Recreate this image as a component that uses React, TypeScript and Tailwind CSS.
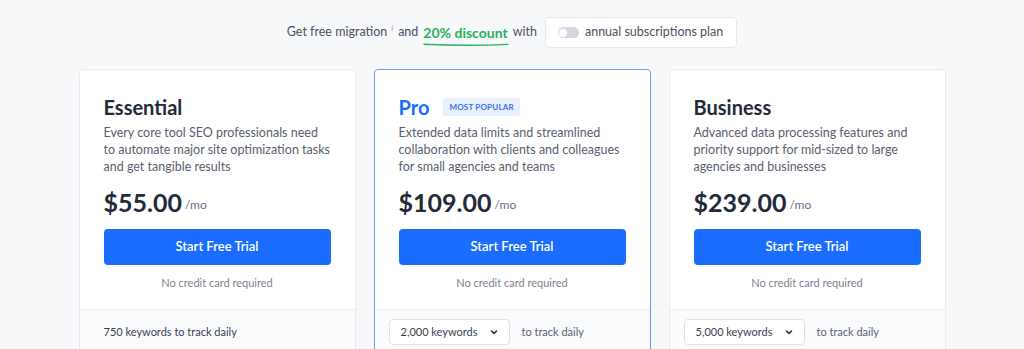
const plans = [
  {
    name: "Essential",
    desc: [
      "Every core tool SEO professionals need",
      "to automate major site optimization tasks",
      "and get tangible results",
    ],
    price: "$55.00",
    keywords: "750",
    select: false,
    popular: false,
  },
  {
    name: "Pro",
    desc: [
      "Extended data limits and streamlined",
      "collaboration with clients and colleagues",
      "for small agencies and teams",
    ],
    price: "$109.00",
    keywords: "2,000",
    select: true,
    popular: true,
  },
  {
    name: "Business",
    desc: [
      "Advanced data processing features and",
      "priority support for mid-sized to large",
      "agencies and businesses",
    ],
    price: "$239.00",
    keywords: "5,000",
    select: true,
    popular: false,
  },
];

function Chevron() {
  return (
    <svg width="10" height="10" viewBox="0 0 10 10" fill="none">
      <path d="M2.5 4l2.5 2.5L7.5 4" stroke="#2b3140" strokeWidth="1.6" strokeLinecap="round" strokeLinejoin="round" />
    </svg>
  );
}

export default function App() {
  return (
    <div
      className="w-[1024px] h-[349px] overflow-hidden bg-[#f7f8fa] text-[#232a3a]"
      style={{ fontFamily: 'Lato, "Open Sans", sans-serif' }}
    >
      <div className="flex items-center justify-center h-[63px] pt-[2px] text-[12.5px] text-[#4b5262]">
        <span>Get free migration</span>
        <span className="relative -top-[5px] ml-[4px] text-[8px] italic text-[#8a8f9c]">i</span>
        <span className="ml-[5px]">and</span>
        <span className="relative ml-[5px] text-[14px] font-bold text-[#2bb15f]">
          20% discount
          <svg className="absolute left-0 -bottom-[4px]" width="86" height="5" viewBox="0 0 86 5" fill="none">
            <path d="M1 2.2 Q43 4.2 85 2.4" stroke="#2bb15f" strokeWidth="1.4" strokeLinecap="round" />
          </svg>
        </span>
        <span className="ml-[5px]">with</span>
        <div className="ml-[8px] flex items-center gap-[6px] h-[31px] pl-[12px] pr-[13px] rounded-[4px] border border-[#e6e8ec] bg-white">
          <div className="w-[21px] h-[11px] rounded-full bg-[#d4d7de] p-[1.5px]">
            <div className="w-[8px] h-[8px] rounded-full bg-white" />
          </div>
          <span className="text-[#4b5262]">annual subscriptions plan</span>
        </div>
      </div>

      <div className="flex justify-center gap-[18px] pt-[6px]">
        {plans.map((p) => (
          <div
            key={p.name}
            className={
              "w-[277px] rounded-[4px] bg-white border " +
              (p.popular ? "border-[#6b9cf5]" : "border-[#e9ebef]")
            }
          >
            <div className="px-[24px] pt-[25px] pb-[18px]">
              <div className="flex items-center gap-[14px] h-[24px]">
                <span className={"text-[20px] font-bold " + (p.popular ? "text-[#1a6dff]" : "text-[#232a3a]")}>
                  {p.name}
                </span>
                {p.popular && (
                  <span className="px-[6px] py-[4px] rounded-[3px] bg-[#e8f0fe] text-[8px] leading-[10px] font-bold text-[#3b74e6] tracking-[0.2px]">
                    MOST POPULAR
                  </span>
                )}
              </div>
              <div className="mt-[5px] -mr-[16px] text-[12.5px] leading-[17px] text-[#5a6070] whitespace-nowrap">
                {p.desc.map((l) => (
                  <div key={l}>{l}</div>
                ))}
              </div>
              <div className="mt-[12px] flex items-end">
                <span className="text-[25px] font-bold leading-[30px] text-[#232a3a]">{p.price}</span>
                <span className="ml-[3px] mb-[3px] text-[12px] text-[#6b7180]">/mo</span>
              </div>
              <button className="mt-[12px] w-full h-[36px] rounded-[4px] bg-[#1a6dff] text-white text-[13px] font-semibold">
                Start Free Trial
              </button>
              <p className="mt-[10px] text-center text-[11px] leading-[16px] text-[#7d8290]">No credit card required</p>
            </div>
            <div className="h-[60px] border-t border-[#eceef2] bg-[#fafbfc] px-[24px] pt-[9px] text-[11px] text-[#3a4150]">
              {p.select ? (
                <div className="flex items-center">
                  <div className="flex items-center justify-between w-[121px] h-[26px] pl-[11px] pr-[10px] rounded-[4px] border border-[#dde0e6] bg-white -ml-[10px]">
                    <span>{p.keywords} keywords</span>
                    <Chevron />
                  </div>
                  <span className="ml-[12px] text-[#5a6070]">to track daily</span>
                </div>
              ) : (
                <div className="h-[26px] flex items-center">
                  {p.keywords} keywords to track daily
                </div>
              )}
            </div>
          </div>
        ))}
      </div>
    </div>
  );
}
